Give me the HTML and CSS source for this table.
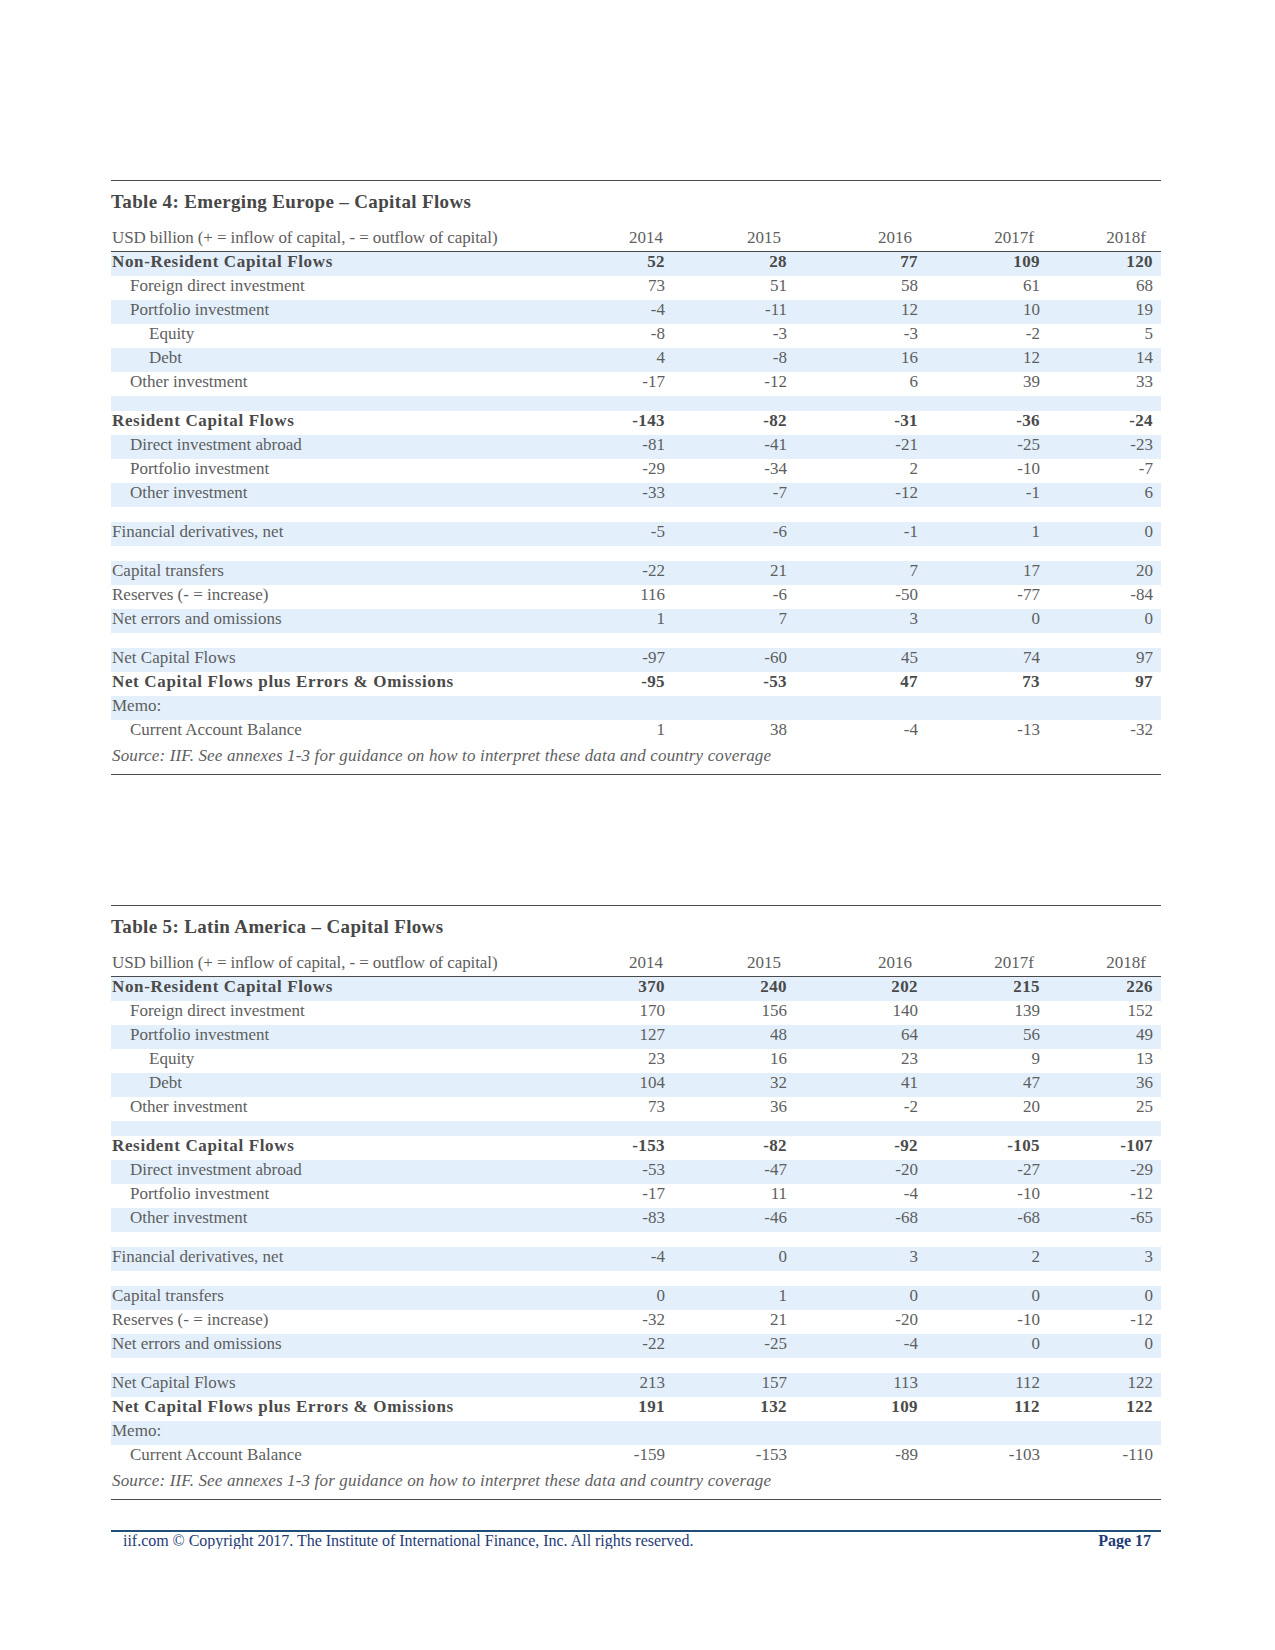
FILE: index.html
```html
<!DOCTYPE html>
<html lang="en">
<head>
<meta charset="utf-8">
<title>IIF Capital Flows – Page 17</title>
<link rel="stylesheet" href="styles.css">
</head>
<body>
<div class="page">

  <section class="tbl">
    <h2 class="title">Table 4: Emerging Europe – Capital Flows</h2>
    <div class="grid head">
      <span class="lbl">USD billion (+ = inflow of capital, - = outflow of capital)</span>
      <span class="yr y1">2014</span><span class="yr y2">2015</span><span class="yr y3">2016</span><span class="yr y4">2017f</span><span class="yr y5">2018f</span>
    </div>
    <div class="rows">
      <div class="grid row bold"><span class="lbl">Non-Resident Capital Flows</span><span class="n">52</span><span class="n">28</span><span class="n">77</span><span class="n">109</span><span class="n">120</span></div>
      <div class="grid row"><span class="lbl i1">Foreign direct investment</span><span class="n">73</span><span class="n">51</span><span class="n">58</span><span class="n">61</span><span class="n">68</span></div>
      <div class="grid row"><span class="lbl i1">Portfolio investment</span><span class="n">-4</span><span class="n">-11</span><span class="n">12</span><span class="n">10</span><span class="n">19</span></div>
      <div class="grid row"><span class="lbl i2">Equity</span><span class="n">-8</span><span class="n">-3</span><span class="n">-3</span><span class="n">-2</span><span class="n">5</span></div>
      <div class="grid row"><span class="lbl i2">Debt</span><span class="n">4</span><span class="n">-8</span><span class="n">16</span><span class="n">12</span><span class="n">14</span></div>
      <div class="grid row"><span class="lbl i1">Other investment</span><span class="n">-17</span><span class="n">-12</span><span class="n">6</span><span class="n">39</span><span class="n">33</span></div>
      <div class="spacer"></div>
      <div class="grid row bold"><span class="lbl">Resident Capital Flows</span><span class="n">-143</span><span class="n">-82</span><span class="n">-31</span><span class="n">-36</span><span class="n">-24</span></div>
      <div class="grid row"><span class="lbl i1">Direct investment abroad</span><span class="n">-81</span><span class="n">-41</span><span class="n">-21</span><span class="n">-25</span><span class="n">-23</span></div>
      <div class="grid row"><span class="lbl i1">Portfolio investment</span><span class="n">-29</span><span class="n">-34</span><span class="n">2</span><span class="n">-10</span><span class="n">-7</span></div>
      <div class="grid row"><span class="lbl i1">Other investment</span><span class="n">-33</span><span class="n">-7</span><span class="n">-12</span><span class="n">-1</span><span class="n">6</span></div>
      <div class="spacer"></div>
      <div class="grid row"><span class="lbl">Financial derivatives, net</span><span class="n">-5</span><span class="n">-6</span><span class="n">-1</span><span class="n">1</span><span class="n">0</span></div>
      <div class="spacer"></div>
      <div class="grid row"><span class="lbl">Capital transfers</span><span class="n">-22</span><span class="n">21</span><span class="n">7</span><span class="n">17</span><span class="n">20</span></div>
      <div class="grid row"><span class="lbl">Reserves (- = increase)</span><span class="n">116</span><span class="n">-6</span><span class="n">-50</span><span class="n">-77</span><span class="n">-84</span></div>
      <div class="grid row"><span class="lbl">Net errors and omissions</span><span class="n">1</span><span class="n">7</span><span class="n">3</span><span class="n">0</span><span class="n">0</span></div>
      <div class="spacer"></div>
      <div class="grid row"><span class="lbl">Net Capital Flows</span><span class="n">-97</span><span class="n">-60</span><span class="n">45</span><span class="n">74</span><span class="n">97</span></div>
      <div class="grid row bold"><span class="lbl">Net Capital Flows plus Errors &amp; Omissions</span><span class="n">-95</span><span class="n">-53</span><span class="n">47</span><span class="n">73</span><span class="n">97</span></div>
      <div class="grid row"><span class="lbl">Memo:</span><span class="n"></span><span class="n"></span><span class="n"></span><span class="n"></span><span class="n"></span></div>
      <div class="grid row"><span class="lbl i1">Current Account Balance</span><span class="n">1</span><span class="n">38</span><span class="n">-4</span><span class="n">-13</span><span class="n">-32</span></div>
    </div>
    <p class="source">Source: IIF. See annexes 1-3 for guidance on how to interpret these data and country coverage</p>
  </section>

  <section class="tbl">
    <h2 class="title">Table 5: Latin America – Capital Flows</h2>
    <div class="grid head">
      <span class="lbl">USD billion (+ = inflow of capital, - = outflow of capital)</span>
      <span class="yr y1">2014</span><span class="yr y2">2015</span><span class="yr y3">2016</span><span class="yr y4">2017f</span><span class="yr y5">2018f</span>
    </div>
    <div class="rows">
      <div class="grid row bold"><span class="lbl">Non-Resident Capital Flows</span><span class="n">370</span><span class="n">240</span><span class="n">202</span><span class="n">215</span><span class="n">226</span></div>
      <div class="grid row"><span class="lbl i1">Foreign direct investment</span><span class="n">170</span><span class="n">156</span><span class="n">140</span><span class="n">139</span><span class="n">152</span></div>
      <div class="grid row"><span class="lbl i1">Portfolio investment</span><span class="n">127</span><span class="n">48</span><span class="n">64</span><span class="n">56</span><span class="n">49</span></div>
      <div class="grid row"><span class="lbl i2">Equity</span><span class="n">23</span><span class="n">16</span><span class="n">23</span><span class="n">9</span><span class="n">13</span></div>
      <div class="grid row"><span class="lbl i2">Debt</span><span class="n">104</span><span class="n">32</span><span class="n">41</span><span class="n">47</span><span class="n">36</span></div>
      <div class="grid row"><span class="lbl i1">Other investment</span><span class="n">73</span><span class="n">36</span><span class="n">-2</span><span class="n">20</span><span class="n">25</span></div>
      <div class="spacer"></div>
      <div class="grid row bold"><span class="lbl">Resident Capital Flows</span><span class="n">-153</span><span class="n">-82</span><span class="n">-92</span><span class="n">-105</span><span class="n">-107</span></div>
      <div class="grid row"><span class="lbl i1">Direct investment abroad</span><span class="n">-53</span><span class="n">-47</span><span class="n">-20</span><span class="n">-27</span><span class="n">-29</span></div>
      <div class="grid row"><span class="lbl i1">Portfolio investment</span><span class="n">-17</span><span class="n">11</span><span class="n">-4</span><span class="n">-10</span><span class="n">-12</span></div>
      <div class="grid row"><span class="lbl i1">Other investment</span><span class="n">-83</span><span class="n">-46</span><span class="n">-68</span><span class="n">-68</span><span class="n">-65</span></div>
      <div class="spacer"></div>
      <div class="grid row"><span class="lbl">Financial derivatives, net</span><span class="n">-4</span><span class="n">0</span><span class="n">3</span><span class="n">2</span><span class="n">3</span></div>
      <div class="spacer"></div>
      <div class="grid row"><span class="lbl">Capital transfers</span><span class="n">0</span><span class="n">1</span><span class="n">0</span><span class="n">0</span><span class="n">0</span></div>
      <div class="grid row"><span class="lbl">Reserves (- = increase)</span><span class="n">-32</span><span class="n">21</span><span class="n">-20</span><span class="n">-10</span><span class="n">-12</span></div>
      <div class="grid row"><span class="lbl">Net errors and omissions</span><span class="n">-22</span><span class="n">-25</span><span class="n">-4</span><span class="n">0</span><span class="n">0</span></div>
      <div class="spacer"></div>
      <div class="grid row"><span class="lbl">Net Capital Flows</span><span class="n">213</span><span class="n">157</span><span class="n">113</span><span class="n">112</span><span class="n">122</span></div>
      <div class="grid row bold"><span class="lbl">Net Capital Flows plus Errors &amp; Omissions</span><span class="n">191</span><span class="n">132</span><span class="n">109</span><span class="n">112</span><span class="n">122</span></div>
      <div class="grid row"><span class="lbl">Memo:</span><span class="n"></span><span class="n"></span><span class="n"></span><span class="n"></span><span class="n"></span></div>
      <div class="grid row"><span class="lbl i1">Current Account Balance</span><span class="n">-159</span><span class="n">-153</span><span class="n">-89</span><span class="n">-103</span><span class="n">-110</span></div>
    </div>
    <p class="source">Source: IIF. See annexes 1-3 for guidance on how to interpret these data and country coverage</p>
  </section>

  <footer class="footer">
    <span class="copy">iif.com © Copyright 2017. The Institute of International Finance, Inc. All rights reserved.</span>
    <span class="pageno">Page 17</span>
  </footer>

</div>
</body>
</html>
```

FILE: styles.css
```css
html, body {
  margin: 0;
  padding: 0;
  background: #ffffff;
}

body {
  font-family: "Liberation Serif", "Times New Roman", serif;
  color: #5e5e5e;
}

.page {
  width: 1050px;
  padding: 180px 0 0 111px;
}

.tbl {
  border-top: 1px solid #4a4a4a;
  border-bottom: 1px solid #4a4a4a;
}

.tbl + .tbl {
  margin-top: 130px;
}

.title {
  margin: 9px 0 0;
  font-size: 19px;
  line-height: 24px;
  font-weight: bold;
  color: #474747;
  letter-spacing: 0.35px;
}

.grid {
  display: grid;
  grid-template-columns: 434px 120px 122px 131px 122px 121px;
}

.head {
  margin-top: 12px;
  font-size: 17px;
  line-height: 24px;
  padding-bottom: 1px;
  border-bottom: 1px solid #4a4a4a;
}

.head .lbl {
  padding-left: 1px;
  letter-spacing: -0.1px;
}

.yr {
  text-align: right;
}

.y1 { padding-right: 2px; }
.y2 { padding-right: 6px; }
.y3 { padding-right: 6px; }
.y4 { padding-right: 6px; }
.y5 { padding-right: 15px; }

.rows > :nth-child(odd) {
  background: #e3f0fc;
}

.row {
  height: 24px;
  font-size: 17px;
  line-height: 20px;
  box-sizing: border-box;
}

.row .lbl {
  padding-left: 1px;
  white-space: nowrap;
}

.row .lbl.i1 {
  padding-left: 19px;
}

.row .lbl.i2 {
  padding-left: 38px;
}

.n {
  text-align: right;
}

.row .n:last-child {
  padding-right: 8px;
}

.bold {
  font-weight: bold;
  color: #4a4a4a;
}

.bold .lbl {
  letter-spacing: 0.65px;
}

.bold .n {
  letter-spacing: 0.4px;
}

.spacer {
  height: 15px;
}

.source {
  margin: 0;
  font-size: 17px;
  font-style: italic;
  line-height: 24px;
  letter-spacing: 0.15px;
  padding: 0 0 6px 1px;
  color: #5e5e5e;
}

.footer {
  margin-top: 30px;
  border-top: 2px solid #1f4e79;
  display: flex;
  justify-content: space-between;
  align-items: baseline;
  padding: 0 10px 0 12px;
  color: #1f3c78;
  line-height: 17px;
}

.copy {
  font-size: 16px;
  letter-spacing: -0.02px;
}

.pageno {
  font-size: 16px;
  font-weight: bold;
}
```
